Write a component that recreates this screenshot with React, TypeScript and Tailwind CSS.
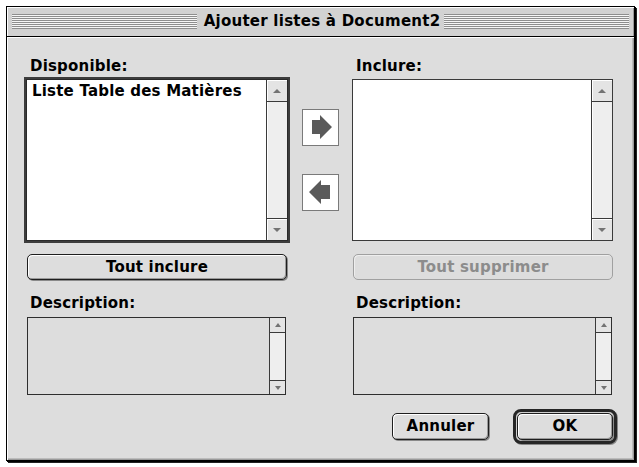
const font = { fontFamily: '"DejaVu Sans", "Liberation Sans", sans-serif' };

function Triangle({ dir, w, h }: { dir: 'up' | 'down'; w: number; h: number }) {
  const points = dir === 'up' ? `0,${h} ${w / 2},0 ${w},${h}` : `0,0 ${w / 2},${h} ${w},0`;
  return (
    <svg width={w} height={h} viewBox={`0 0 ${w} ${h}`}>
      <polygon points={points} fill="#737373" />
    </svg>
  );
}

function ListScrollbar() {
  return (
    <div className="w-[21px] border-l border-[#3a3a3a] bg-[#eeeeee] flex flex-col">
      <div className="h-[22px] border-b border-[#3a3a3a] bg-[#e4e4e4] shadow-[inset_1px_1px_0_#fff] flex items-center justify-center">
        <Triangle dir="up" w={8} h={4} />
      </div>
      <div className="flex-1 shadow-[inset_1px_0_0_#fff]" />
      <div className="h-[22px] border-t border-[#3a3a3a] bg-[#e4e4e4] shadow-[inset_1px_1px_0_#fff] flex items-center justify-center">
        <Triangle dir="down" w={8} h={4} />
      </div>
    </div>
  );
}

function SmallScrollbar() {
  return (
    <div className="w-[16px] border-l border-[#3a3a3a] bg-[#eeeeee] flex flex-col">
      <div className="h-[15px] border-b border-[#3a3a3a] bg-[#e4e4e4] flex items-center justify-center">
        <Triangle dir="up" w={6} h={4} />
      </div>
      <div className="flex-1" />
      <div className="h-[14px] border-t border-[#3a3a3a] bg-[#e4e4e4] flex items-center justify-center">
        <Triangle dir="down" w={6} h={4} />
      </div>
    </div>
  );
}

function ArrowButton({ dir }: { dir: 'right' | 'left' }) {
  const points =
    dir === 'right'
      ? '10,11 18,11 18,6 30,18 18,30 18,25 10,25'
      : '28,11 19,11 19,6 7,18 19,30 19,25 28,25';
  return (
    <div className="w-[37px] h-[37px] bg-white border border-[#7a7a7a]">
      <svg width="35" height="35" viewBox="1 1 35 35">
        <polygon points={points} fill="#5a5a5a" />
      </svg>
    </div>
  );
}

function PushButton({ label, disabled, className }: { label: string; disabled?: boolean; className: string }) {
  return (
    <div
      className={
        'rounded-[5px] border flex items-center justify-center font-bold text-[15px] tracking-[0.2px] leading-none ' +
        (disabled
          ? 'border-[#a0a0a0] text-[#8c8c8c] bg-[#dddddd] shadow-[inset_1px_1px_0_#eee]'
          : 'border-[#1e1e1e] text-black bg-[#dddddd] shadow-[inset_1px_1px_0_#fff,inset_-1px_-1px_0_#9a9a9a,1px_1px_0_#8a8a8a] ') +
        ' ' +
        className
      }
    >
      {label}
    </div>
  );
}

function Pinstripe() {
  return (
    <div className="flex-1 h-[15px] bg-[repeating-linear-gradient(to_bottom,#8e8e8e_0px,#8e8e8e_1px,#f6f6f6_1px,#f6f6f6_2px)]" />
  );
}

export default function App() {
  return (
    <div className="min-h-screen bg-white pl-[6px] pt-[6px]" style={font}>
      <div className="w-[629px] h-[455px] border border-black shadow-[1px_1px_0_#000,2px_2px_0_#222] flex flex-col">
        <div className="h-[30px] border-b border-black bg-[#d2d2d2] shadow-[inset_1px_1px_0_#fff,inset_-1px_0_0_#999] flex items-center px-[5px]">
          <Pinstripe />
          <div className="ml-[7px] mr-[4px] font-bold text-[15px] tracking-[0.25px] leading-none text-black">
            Ajouter listes à Document2
          </div>
          <Pinstripe />
        </div>

        <div className="flex-1 bg-[#dddddd] shadow-[inset_1px_1px_0_#fff,inset_-1px_-1px_0_#9a9a9a,inset_-2px_-2px_0_#bbb] pl-[19px] pt-[20px] flex flex-col">
          <div className="flex font-bold text-[15px] leading-[18px] tracking-[0.2px] text-black">
            <div className="w-[262px] pl-[4px]">Disponible:</div>
            <div className="w-[64px]" />
            <div className="w-[261px] pl-[4px]">Inclure:</div>
          </div>

          <div className="flex mt-[4px] h-[162px]">
            <div className="w-[262px] h-[162px] border border-[#2a2a2a] shadow-[0_0_0_2px_#3c3c3c] bg-white flex">
              <div className="flex-1 pl-[5px] pt-[2px] font-bold text-[15px] leading-[18px] tracking-[0.2px] text-black">
                Liste Table des Matières
              </div>
              <ListScrollbar />
            </div>
            <div className="w-[64px] flex flex-col items-center justify-center gap-[28px] pl-[1px]">
              <ArrowButton dir="right" />
              <ArrowButton dir="left" />
            </div>
            <div className="w-[261px] h-[162px] border border-[#3a3a3a] bg-white flex">
              <div className="flex-1" />
              <ListScrollbar />
            </div>
          </div>

          <div className="flex mt-[13px]">
            <div className="w-[262px] pl-[1px]">
              <PushButton label="Tout inclure" className="w-[260px] h-[26px]" />
            </div>
            <div className="w-[64px]" />
            <div className="w-[261px] pl-[1px]">
              <PushButton label="Tout supprimer" disabled className="w-[260px] h-[26px]" />
            </div>
          </div>

          <div className="flex mt-[14px] font-bold text-[15px] leading-[18px] tracking-[0.2px] text-black">
            <div className="w-[262px] pl-[4px]">Description:</div>
            <div className="w-[64px]" />
            <div className="w-[261px] pl-[4px]">Description:</div>
          </div>

          <div className="flex mt-[5px]">
            <div className="w-[262px] pl-[1px]">
              <div className="w-[259px] h-[78px] border border-[#2e2e2e] bg-[#dddddd] flex">
                <div className="flex-1" />
                <SmallScrollbar />
              </div>
            </div>
            <div className="w-[64px]" />
            <div className="w-[261px] pl-[1px]">
              <div className="w-[259px] h-[78px] border border-[#2e2e2e] bg-[#dddddd] flex">
                <div className="flex-1" />
                <SmallScrollbar />
              </div>
            </div>
          </div>

          <div className="flex justify-end items-center gap-[24px] pr-[17px] mt-[14px]">
            <PushButton label="Annuler" className="w-[97px] h-[27px]" />
            <div className="w-[104px] h-[35px] rounded-[8px] border-[3px] border-[#262626] bg-[#cfcfcf] p-[1px] shadow-[1px_1px_0_#888]">
              <PushButton label="OK" className="w-full h-full" />
            </div>
          </div>
        </div>
      </div>
    </div>
  );
}
